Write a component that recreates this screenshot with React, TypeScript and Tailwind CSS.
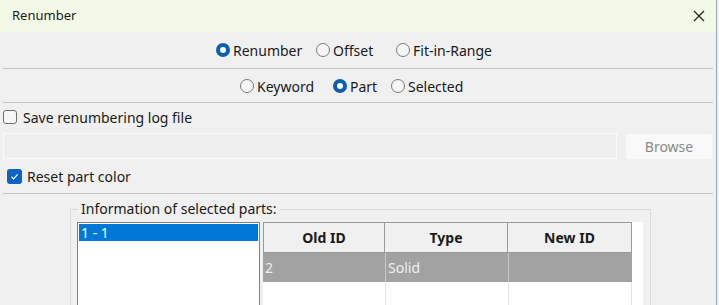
import React from "react";

function Radio({ label, checked, w }: { label: string; checked?: boolean; w?: string }) {
  return (
    <label className={`flex items-center gap-[3px] ${w ?? ""}`}>
      {checked ? (
        <span className="flex h-[14px] w-[14px] items-center justify-center rounded-full bg-[#0a5fb4]">
          <span className="h-[6px] w-[6px] rounded-full bg-white" />
        </span>
      ) : (
        <span className="h-[14px] w-[14px] rounded-full border border-[#7a7a7a] bg-[#f7f7f7]" />
      )}
      <span>{label}</span>
    </label>
  );
}

function Separator() {
  return <div className="mx-[3px] h-[2px] border-t border-[#c4c4c4] border-b-white" />;
}

export default function App() {
  return (
    <div
      className="h-[305px] w-[719px] overflow-hidden bg-[#f0f0f0] text-[14px] text-[#1a1a1a]"
      style={{ fontFamily: '"Noto Sans", "Open Sans", sans-serif' }}
    >
      <div className="h-[305px] w-[717px] border-r border-[#9aa8bb]">
        {/* Title bar */}
        <div className="flex h-[32px] items-center justify-between bg-[#f3f9e7] pl-[12px] pr-[8px]">
          <span className="text-[13px]">Renumber</span>
          <svg width="14" height="14" viewBox="0 0 14 14" className="mr-[2px]">
            <path d="M2 2L12 12M12 2L2 12" stroke="#222" strokeWidth="1.3" />
          </svg>
        </div>

        {/* Mode */}
        <div className="flex h-[36px] items-center pl-[216px]">
          <Radio label="Renumber" checked w="w-[100px]" />
          <Radio label="Offset" w="w-[80px]" />
          <Radio label="Fit-in-Range" />
        </div>
        <Separator />

        {/* Scope */}
        <div className="flex h-[32px] items-center pl-[240px]">
          <Radio label="Keyword" w="w-[93px]" />
          <Radio label="Part" checked w="w-[58px]" />
          <Radio label="Selected" />
        </div>
        <Separator />

        {/* Log file */}
        <div className="flex h-[26px] items-center gap-[6px] pl-[3px]">
          <span className="h-[14px] w-[14px] rounded-[3px] border border-[#6e6e6e] bg-[#f7f7f7]" />
          <span>Save renumbering log file</span>
        </div>
        <div className="mt-[3px] flex items-center gap-[9px] pl-[3px] pr-[4px]">
          <div className="h-[26px] flex-1 border border-[#fafafa] bg-[#efefef]" />
          <button className="h-[25px] w-[86px] rounded-[3px] bg-[#f9f9f9] text-[14px] text-[#8a8a8a]">
            Browse
          </button>
        </div>

        {/* Reset color */}
        <div className="mt-[2px] flex h-[30px] items-center gap-[5px] pl-[7px]">
          <span className="flex h-[15px] w-[15px] items-center justify-center rounded-[3px] bg-[#0b63c2]">
            <svg width="9" height="9" viewBox="0 0 9 9">
              <path d="M1.5 4.8L3.6 6.8L7.6 2.4" stroke="white" strokeWidth="1.2" fill="none" />
            </svg>
          </span>
          <span>Reset part color</span>
        </div>
        <div className="mt-[2px]">
          <Separator />
        </div>

        {/* Group box */}
        <div className="relative ml-[70px] mt-[14px] h-[120px] w-[581px] border border-[#dcdcdc] border-b-0">
          <span className="absolute left-[7px] top-[-11px] bg-[#f0f0f0] px-[3px] leading-[20px]">
            Information of selected parts:
          </span>
          <div className="ml-[6px] mt-[12px] flex gap-[3px]">
            <div className="h-[90px] w-[183px] border border-[#828282] bg-white p-[1px]">
              <div className="h-[17px] bg-[#0078d7] pl-[2px] leading-[17px] text-white">1 - 1</div>
            </div>
            <div className="h-[90px] w-[380px] bg-white">
              <div className="grid h-[31px] w-[369px] grid-cols-[122px_123px_124px] bg-[#f0f0f0] font-bold">
                <div className="flex items-center justify-center border border-[#9a9a9a]">Old ID</div>
                <div className="flex items-center justify-center border border-l-0 border-[#9a9a9a]">Type</div>
                <div className="flex items-center justify-center border border-l-0 border-[#9a9a9a]">New ID</div>
              </div>
              <div className="grid h-[29px] w-[369px] grid-cols-[122px_123px_124px] bg-[#a2a2a2] text-[#eeeeee]">
                <div className="pl-[2px] leading-[29px]">2</div>
                <div className="border-l border-[#c8c8c8] pl-[2px] leading-[29px]">Solid</div>
                <div className="border-l border-[#c8c8c8]" />
              </div>
              <div className="grid h-[30px] w-[369px] grid-cols-[122px_123px_124px]">
                <div />
                <div className="border-l border-[#e4e4e4]" />
                <div className="border-l border-r border-[#e4e4e4]" />
              </div>
            </div>
          </div>
        </div>
      </div>
    </div>
  );
}
